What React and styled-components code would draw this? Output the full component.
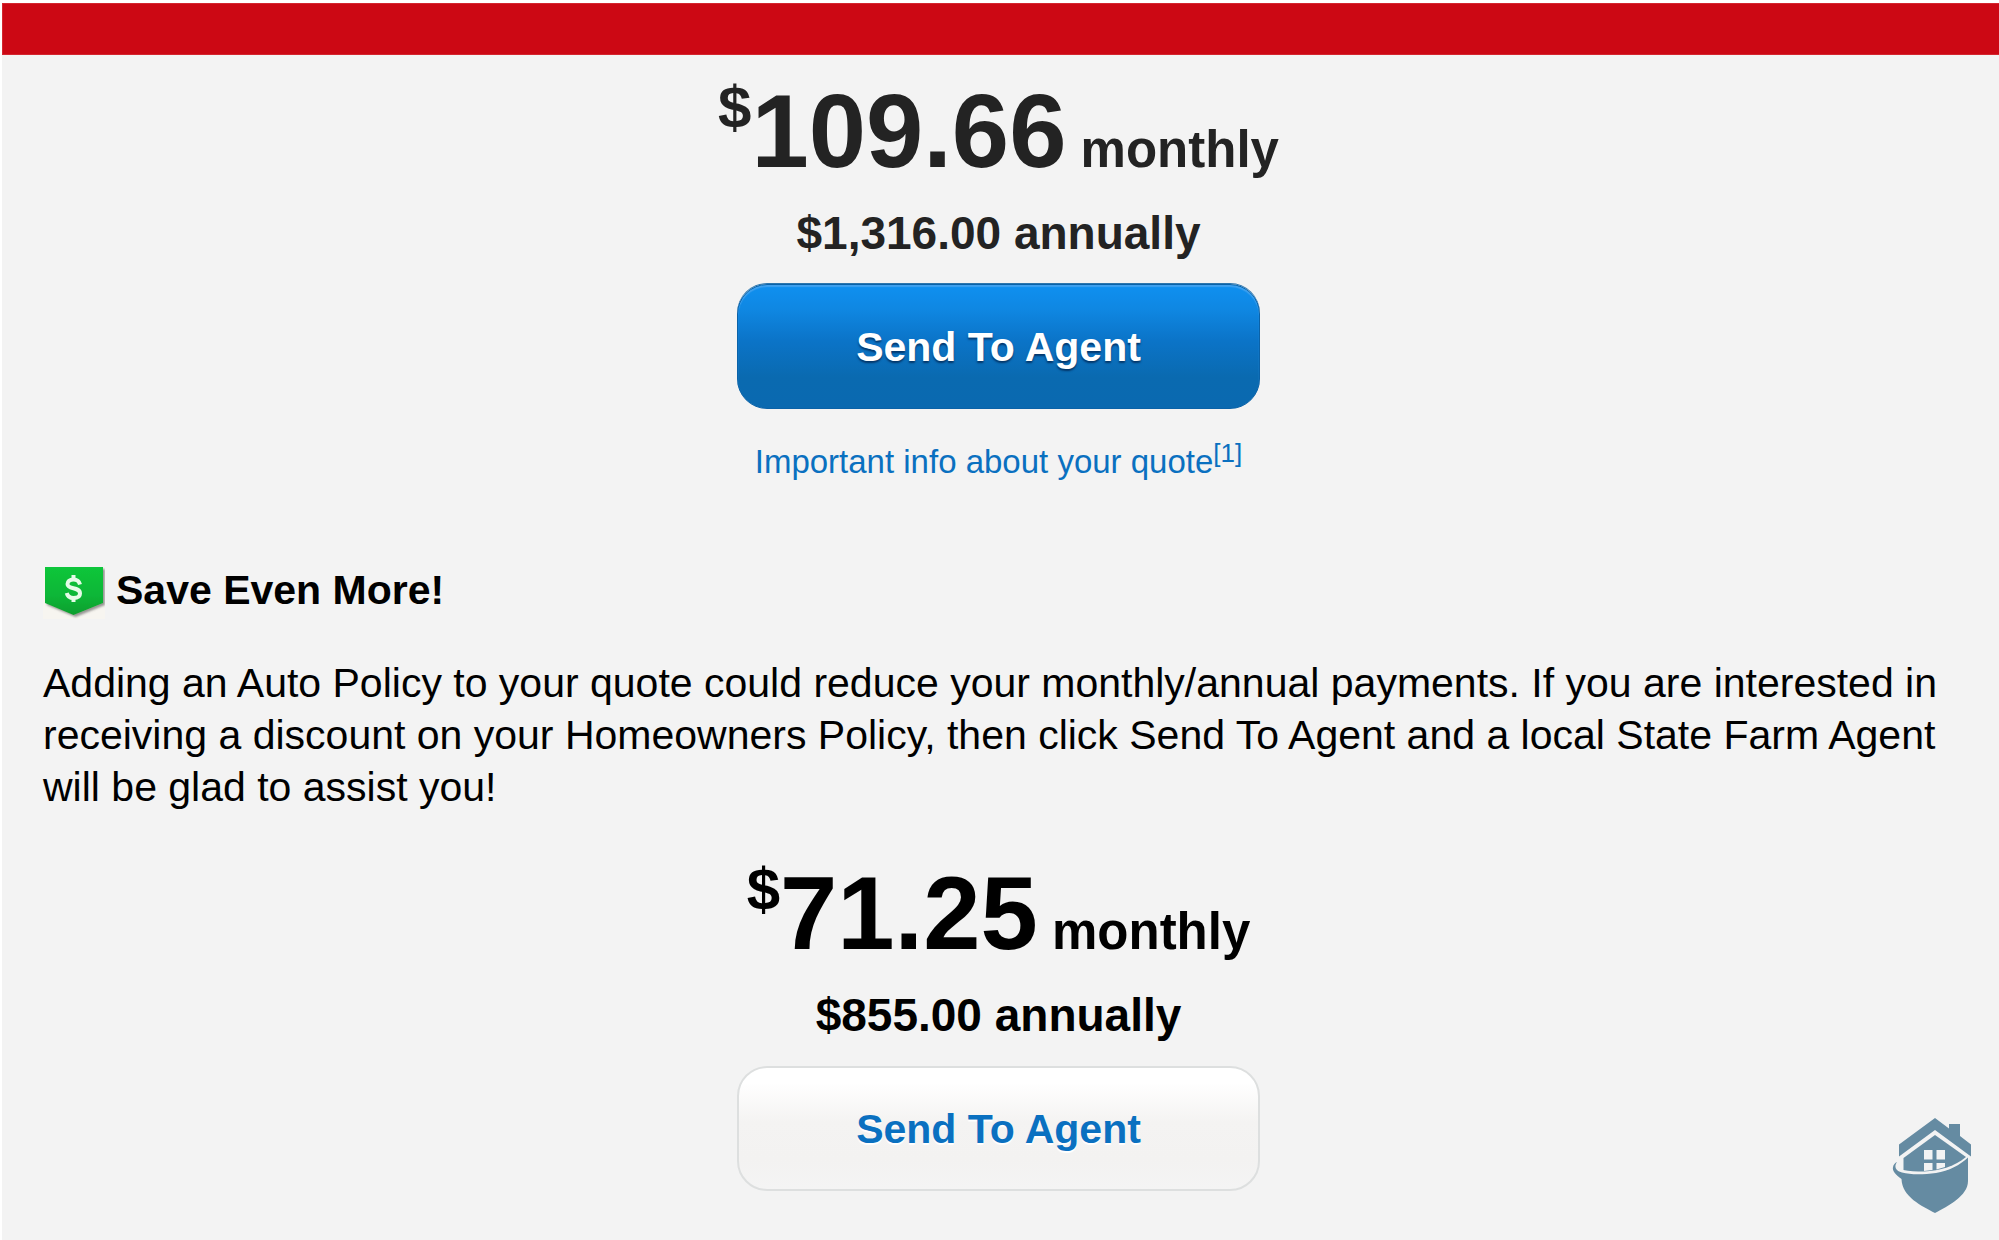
import React from "react";
import styled, { createGlobalStyle, css } from "styled-components";

const GlobalStyle = createGlobalStyle`
  *, *::before, *::after { box-sizing: border-box; }
  body {
    margin: 0;
    background: #ffffff;
    font-family: "Liberation Sans", Arial, Helvetica, sans-serif;
    color: #000000;
  }
`;

const Page = styled.div`
  min-height: 100vh;
  padding: 3px 0 0 2px;
  display: flex;
  flex-direction: column;
`;

const TopBar = styled.header`
  height: 52px;
  background: #cc0814;
  border: 1px solid #d4262f;
  border-right: 0;
`;

const Content = styled.main`
  flex: 1;
  padding: 17px 45px 44px 41px;
  background: #f3f3f3;
`;

const Quote = styled.section`
  display: flex;
  flex-direction: column;
  align-items: center;
  color: ${(p) => p.$color};
`;

const Monthly = styled.p`
  margin: 0 0 11px;
  font-size: 103px;
  line-height: 120px;
  font-weight: 700;
  white-space: nowrap;
`;

const Currency = styled.span`
  font-size: 60px;
  line-height: 0;
  vertical-align: 39px;
`;

const Period = styled.span`
  font-size: 51px;
  line-height: 0;
`;

const Annual = styled.p`
  margin: 0 0 21px;
  font-size: 46px;
  line-height: 60px;
  font-weight: 700;
`;

const primary = css`
  color: #ffffff;
  background: linear-gradient(#0f90f0 0%, #0f87e2 20%, #0b74c8 45%, #0a6ab0 75%, #0a69b0 100%);
  border: 1px solid #0a62a8;
  box-shadow: inset 0 2px 1px #3fa0ee, 0 -1px 0 #2c76ae;
  text-shadow: 0 2px 2px rgba(0, 30, 70, 0.7);
`;

const secondary = css`
  color: #0a70c0;
  background: linear-gradient(#ffffff 0%, #ffffff 12%, #f4f3f2 45%, #f3f2f1 75%, #f4f4f4 100%);
  border: 2px solid #dddfdf;
  text-shadow: 0 2px 1px #ffffff;
`;

const SendButton = styled.button`
  width: 523px;
  max-width: 100%;
  height: 125px;
  padding: 0;
  border-radius: 30px;
  font: 700 41px/48px "Liberation Sans", Arial, Helvetica, sans-serif;
  cursor: pointer;
  ${(p) => (p.$primary ? primary : secondary)}
`;

const InfoLink = styled.a`
  margin-top: 33px;
  font-size: 33px;
  line-height: 40px;
  color: #0a70c0;
  text-decoration: none;

  sup {
    font-size: 26px;
    line-height: 0;
    vertical-align: 11px;
  }
`;

const Savings = styled.section`
  margin: 85px 0 41px;
`;

const SavingsHeader = styled.div`
  display: flex;
  align-items: flex-start;
  gap: 11px;
`;

const SavingsTitle = styled.h2`
  margin: 0;
  font-size: 41px;
  line-height: 46px;
  font-weight: 700;
`;

const SavingsText = styled.p`
  margin: 38px 0 0;
  font-size: 41px;
  line-height: 52px;
`;

const Badge = styled.svg`
  display: block;
  flex: none;
  width: 62px;
  height: 52px;
`;

const Watermark = styled.svg`
  position: fixed;
  right: 25px;
  bottom: 26px;
  width: 82px;
  height: 96px;
`;

function DollarBadge() {
  return (
    <Badge viewBox="0 0 62 52" aria-hidden="true">
      <defs>
        <linearGradient id="badge-fill" x1="0" y1="0" x2="0" y2="1">
          <stop offset="0" stopColor="#0ac63a" />
          <stop offset="0.6" stopColor="#0ab637" />
          <stop offset="1" stopColor="#0a9e2e" />
        </linearGradient>
        <filter id="badge-shadow" x="-10%" y="-10%" width="130%" height="130%">
          <feDropShadow dx="2" dy="2" stdDeviation="1" floodColor="#555" floodOpacity="0.6" />
        </filter>
      </defs>
      <rect width="62" height="52" fill="#f7f5f0" />
      <path d="M2 0H60V36L30.500 48L2 36Z" fill="url(#badge-fill)" filter="url(#badge-shadow)" />
      <g fill="none" stroke="#e6fbe8" strokeWidth="4">
        <path d="M37 17.500C36 13.500 33.500 12.500 30.500 12.500C26.500 12.500 24.500 14.500 24.500 17C24.500 23 37 19.500 37 26.500C37 29.500 34.500 31 30.500 31C26.500 31 24.500 29.500 23.800 26" />
        <path d="M30.500 8V13M30.500 30V35" />
      </g>
    </Badge>
  );
}

function HouseShield() {
  return (
    <Watermark viewBox="0 0 82 96" role="img" aria-label="House shield">
      <g fill="#658ba2">
        <path d="M43 0L57 10.500V6H68V18L79 26.500V38.500L43 12L7 38.500V26.500Z" />
        <path d="M43 17L74 39C63 48 48 53 32 53.500C24 53.500 17 53 11.500 52V40Z" />
        <path d="M76 39.500V63C76 78 56 88 43 95C30 88 10 79 9.500 61C4 57 0 53 1 49C1.500 46.500 3 45 5 44C1.500 49 4 53 10 54.500C19 57 32 56.500 44 55C57 53 68 47 76 39.500Z" />
      </g>
      <path d="M32 32H40.500V41.500H32ZM44.500 32H53V41.500H44.500ZM32 45H40.500V52L32 53ZM44.500 45H53V49L44.500 51.500Z" fill="#f3f3f3" />
    </Watermark>
  );
}

function Price({ amount, annual }) {
  return (
    <>
      <Monthly>
        <Currency>$</Currency>
        {amount}
        <Period> monthly</Period>
      </Monthly>
      <Annual>{annual} annually</Annual>
    </>
  );
}

export default function App() {
  return (
    <>
      <GlobalStyle />
      <Page>
        <TopBar />
        <Content>
          <Quote $color="#232323">
            <Price amount="109.66" annual="$1,316.00" />
            <SendButton type="button" $primary>
              Send To Agent
            </SendButton>
            <InfoLink href="#quote-info">
              Important info about your quote<sup>[1]</sup>
            </InfoLink>
          </Quote>
          <Savings>
            <SavingsHeader>
              <DollarBadge />
              <SavingsTitle>Save Even More!</SavingsTitle>
            </SavingsHeader>
            <SavingsText>
              Adding an Auto Policy to your quote could reduce your monthly/annual payments. If you are
              interested in receiving a discount on your Homeowners Policy, then click Send To Agent and a
              local State Farm Agent will be glad to assist you!
            </SavingsText>
          </Savings>
          <Quote $color="#000000">
            <Price amount="71.25" annual="$855.00" />
            <SendButton type="button">Send To Agent</SendButton>
          </Quote>
        </Content>
        <HouseShield />
      </Page>
    </>
  );
}
